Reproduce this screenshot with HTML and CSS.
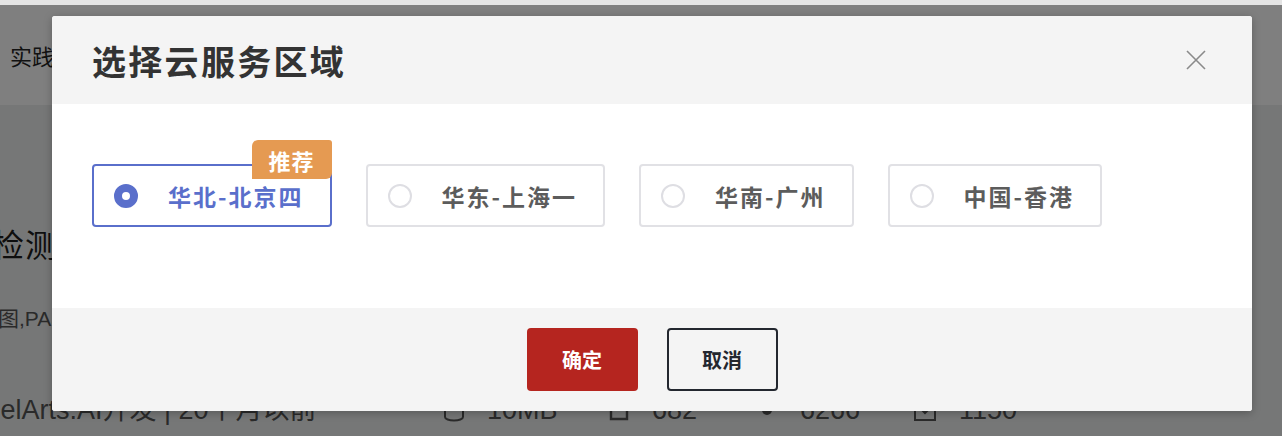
FILE: index.html
```html
<!DOCTYPE html>
<html lang="zh-CN">
<head>
<meta charset="utf-8">
<title>选择云服务区域</title>
<link rel="stylesheet" href="styles.css">
</head>
<body>
<div class="topstrip"></div>
<div class="page">
  <header class="page-header">实践</header>
  <main class="page-body">
    <h1 class="big-title">目标检测</h1>
    <p class="desc">图,PASCAL VOC 数据集</p>
    <div class="meta">
      <span class="meta-author">ModelArts.AI开发 | 20个月以前</span>
      <span class="meta-item w165"><svg width="24" height="24" viewBox="0 0 24 24"><ellipse cx="12" cy="5" rx="9" ry="3" fill="none" stroke="#555" stroke-width="2"/><path d="M3 5v14c0 2 4 3.5 9 3.5s9-1.5 9-3.5V5" fill="none" stroke="#555" stroke-width="2"/></svg>10MB</span>
      <span class="meta-item w148"><svg width="24" height="24" viewBox="0 0 24 24"><path d="M4 3h12l4 4v14H4z" fill="none" stroke="#555" stroke-width="2.4"/></svg>682</span>
      <span class="meta-item w157"><svg width="24" height="24" viewBox="0 0 24 24"><circle cx="12" cy="12" r="5" fill="#555"/></svg>6266</span>
      <span class="meta-item"><svg width="26" height="24" viewBox="0 0 26 24"><path d="M3 10v12h20V10M13 3v12M8 10l5 5 5-5" fill="none" stroke="#555" stroke-width="2"/></svg>1150</span>
    </div>
  </main>
</div>
<div class="mask"></div>
<div class="dialog" role="dialog">
  <div class="dialog-head">
    <h2 class="dialog-title">选择云服务区域</h2>
    <button class="close" aria-label="关闭"><svg width="20" height="20" viewBox="0 0 20 20"><path d="M1 1L19 19M19 1L1 19" stroke="#8a8a8a" stroke-width="1.6" fill="none"/></svg></button>
  </div>
  <div class="dialog-body">
    <div class="options">
      <label class="opt selected"><span class="radio"></span><span class="opt-text">华北-北京四</span><span class="badge">推荐</span></label>
      <label class="opt"><span class="radio"></span><span class="opt-text">华东-上海一</span></label>
      <label class="opt"><span class="radio"></span><span class="opt-text">华南-广州</span></label>
      <label class="opt"><span class="radio"></span><span class="opt-text">中国-香港</span></label>
    </div>
  </div>
  <div class="dialog-foot">
    <button class="btn btn-primary">确定</button>
    <button class="btn btn-default">取消</button>
  </div>
</div>
</body>
</html>
```

FILE: styles.css
```css
* { box-sizing: border-box; }
html, body { margin: 0; padding: 0; }
body {
  width: 1282px;
  height: 436px;
  overflow: hidden;
  position: relative;
  font-family: "Noto Sans CJK SC", "Noto Sans", sans-serif;
  background: #eceeee;
}
.topstrip { height: 5px; background: #e4e4e4; }
.page { height: 431px; overflow: hidden; }
.page-header {
  height: 100px;
  background: #fff;
  display: flex;
  align-items: center;
  padding-left: 10px;
  font-size: 22px;
  color: #252525;
}
.page-body { margin-left: -74px; }
.big-title {
  margin: 114px 0 0;
  font-size: 32px;
  font-weight: normal;
  color: #1c1c1c;
  line-height: 48px;
  letter-spacing: 1px;
}
.desc {
  margin: 38px 0 0 72px;
  font-size: 21px;
  color: #555;
  line-height: 28px;
  font-family: "Liberation Sans", "Noto Sans CJK SC", sans-serif;
}
.meta {
  margin: 62px 0 0 0;
  display: flex;
  align-items: center;
  font-size: 27px;
  color: #555;
  line-height: 30px;
  padding-left: 22px;
  font-family: "Liberation Sans", "Noto Sans CJK SC", sans-serif;
}
.meta-author { width: 494px; flex: none; white-space: nowrap; }
.meta-item { display: flex; align-items: center; gap: 21px; flex: none; }
.w165 { width: 165px; }
.w148 { width: 148px; }
.w157 { width: 157px; }
.mask {
  position: absolute;
  left: 0; top: 5px; right: 0; bottom: 0;
  background: rgba(0, 0, 0, 0.5);
}
.dialog {
  position: absolute;
  left: 52px;
  top: 16px;
  width: 1200px;
  background: #fff;
  border-radius: 3px;
  overflow: hidden;
  box-shadow: 0 2px 8px rgba(0, 0, 0, 0.25);
}
.dialog-head {
  height: 88px;
  background: #f4f4f4;
  display: flex;
  align-items: center;
  justify-content: space-between;
  padding: 0 46px 0 40px;
}
.dialog-title {
  margin: 0;
  font-size: 34px;
  font-weight: bold;
  color: #333;
  letter-spacing: 2.3px;
}
.close {
  border: 0;
  background: none;
  padding: 0;
  width: 20px;
  height: 20px;
  display: flex;
}
.dialog-body {
  height: 204px;
  padding: 60px 0 0 40px;
}
.options { display: flex; gap: 34px; }
.opt {
  position: relative;
  height: 63px;
  display: flex;
  align-items: center;
  padding: 0 26px 0 20px;
  border: 2px solid #e1e1e5;
  border-radius: 4px;
  background: #fff;
}
.opt.selected { border-color: #5a6fcb; }
.radio {
  width: 24px;
  height: 24px;
  border-radius: 50%;
  border: 2px solid #dedee3;
  background: #fff;
  margin-right: 30px;
  flex: none;
}
.opt.selected .radio {
  border: 8px solid #5a6fcb;
  background: #fff;
}
.opt-text {
  font-size: 23px;
  font-weight: bold;
  color: #5c5c5c;
  letter-spacing: 2px;
}
.opt.selected .opt-text { color: #5a6fcb; }
.badge {
  position: absolute;
  right: -2px;
  top: -26px;
  width: 80px;
  height: 39px;
  background: #e59a52;
  color: #fff;
  font-size: 22px;
  font-weight: bold;
  letter-spacing: 1px;
  display: flex;
  align-items: center;
  justify-content: center;
  border-radius: 6px 3px 6px 0;
}
.dialog-foot {
  height: 103px;
  background: #f4f4f4;
  display: flex;
  justify-content: center;
  align-items: center;
  gap: 29px;
}
.btn {
  width: 111px;
  height: 63px;
  border-radius: 4px;
  font-family: "Noto Sans CJK SC", sans-serif;
  font-size: 20px;
  font-weight: bold;
}
.btn-primary { background: #b5251f; color: #fff; border: 0; }
.btn-default { background: #f4f4f4; color: #23272f; border: 2px solid #23272f; }
```
